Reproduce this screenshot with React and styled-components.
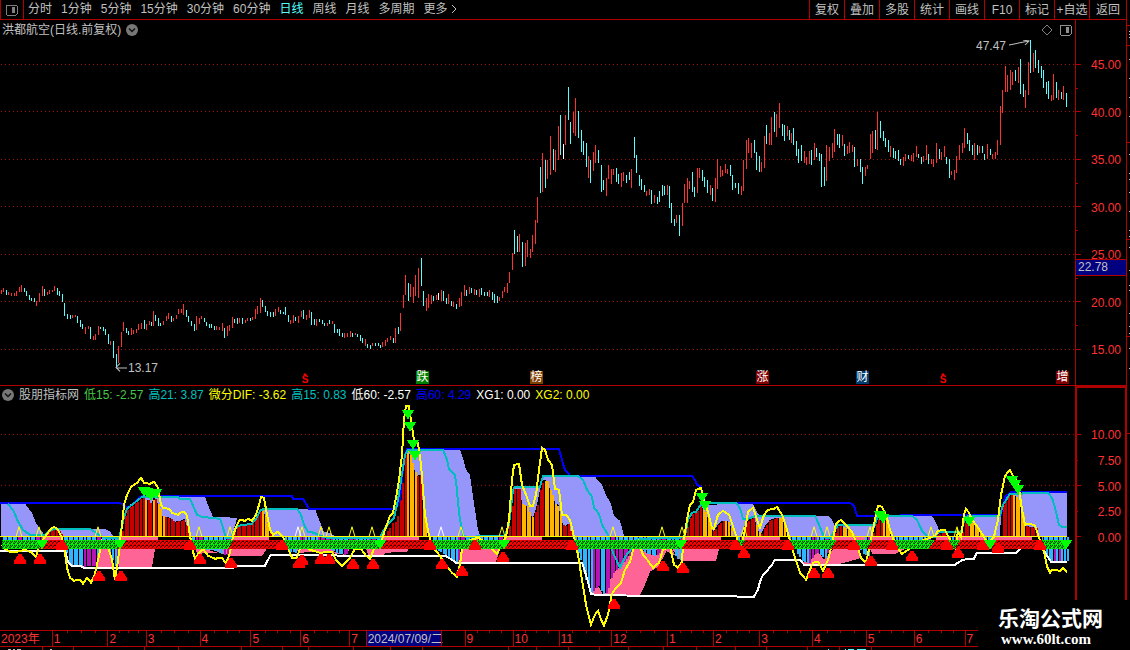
import React from 'react';
import styled, { createGlobalStyle, css } from 'styled-components';

const GlobalStyle = createGlobalStyle`
    * {
        box-sizing: border-box;
    }
    body {
        margin: 0;
        background: #000;
    }
`;

const RED = '#b00000';
const CYAN = '#54ffff';

const Page = styled.div`
    display: flex;
    height: 100vh;
    min-height: 480px;
    overflow: hidden;
    background: #000;
    color: #c0c0c0;
    font-family: 'Liberation Sans', 'Noto Sans CJK SC', sans-serif;
    font-size: 12px;
    line-height: 16px;
    position: relative;
`;

const Main = styled.main`
    flex: 1;
    min-width: 0;
    display: flex;
    flex-direction: column;
`;

const Edge = styled.svg`
    width: 4px;
    height: 100%;
    flex: none;
`;

const Toolbar = styled.nav`
    display: flex;
    justify-content: space-between;
    height: 20px;
    flex: none;
    border-bottom: 1px solid ${RED};
`;

const Periods = styled.div`
    display: flex;
    gap: 9px;
`;

const PlainButton = styled.button`
    border: 0;
    padding: 0;
    background: none;
    color: inherit;
    font: inherit;
    white-space: nowrap;
    display: flex;
    align-items: center;
    cursor: pointer;
`;

const PeriodButton = styled(PlainButton)`
    height: 18px;
    color: ${props => props.$active ? CYAN : '#c0c0c0'};
`;

const LayoutButton = styled(PlainButton)`
    width: 24px;
    height: 19px;
    margin-right: -5px;
    padding-left: 4px;
    border: solid ${RED};
    border-width: 0 1px;
`;

const Tools = styled.div`
    display: flex;
`;

const ToolButton = styled(PlainButton)`
    width: 35px;
    height: 19px;
    justify-content: center;
    border-left: 1px solid ${RED};
    &:last-child {
        width: 37px;
    }
`;

const Panel = styled.section`
    display: flex;
    flex: ${props => props.$size} 1 0;
    min-height: 0;
    ${props => props.$ruled ? css`border-bottom: 1px solid ${RED};` : css``}
`;

const PanelBody = styled.div`
    flex: 1;
    min-width: 0;
    display: flex;
    flex-direction: column;
`;

const PanelHeader = styled.header`
    display: flex;
    align-items: center;
    flex: none;
    height: ${props => props.$height}px;
    gap: 5px;
    padding: 0 3px 0 2px;
    white-space: nowrap;
`;

const HeaderIcons = styled.div`
    display: flex;
    align-items: center;
    gap: 6px;
    margin-left: auto;
`;

const Reading = styled.span`
    color: ${props => props.color};
`;

const Chart = styled.div`
    position: relative;
    flex: 1;
    min-height: 0;
`;

const Plot = styled.svg`
    display: block;
    width: 100%;
    height: 100%;
`;

const Pin = styled.span`
    position: absolute;
    left: ${props => props.$x / 10.75}%;
    top: ${props => (props.$y - 40) / 3.45}%;
    line-height: 16px;
`;

const Badge = styled.span`
    position: absolute;
    left: ${props => props.$x / 10.75}%;
    bottom: 1px;
    width: 13px;
    height: 13px;
    line-height: 13px;
    text-align: center;
    color: #fff;
    background: ${props => props.color};
`;

const DividendMark = styled.span`
    position: absolute;
    left: ${props => props.$x / 10.75}%;
    bottom: 0;
    width: 8px;
    line-height: 10px;
    font-size: 10px;
    font-weight: bold;
    text-align: center;
    color: #ff0000;
    &::before {
        content: '';
        position: absolute;
        left: 2px;
        top: -2px;
        border: solid transparent;
        border-width: 0 2px 2px;
        border-bottom-color: #ff0000;
    }
`;

const Axis = styled.div`
    position: relative;
    width: 51px;
    flex: none;
    display: flex;
    border-left: ${props => props.$bold ? 2 : 1}px solid ${RED};
    ${props => props.$bold ? css`
        border-right: 2px solid ${RED};
        border-top: 2px solid ${RED};
        width: 52px;
        margin-right: -1px;
    ` : css``}
`;

const Ticks = styled.svg`
    width: 6px;
    height: 100%;
    flex: none;
`;

const AxisLabels = styled.div`
    flex: 1;
    display: flex;
    flex-direction: column;
    justify-content: space-between;
    align-items: flex-end;
    padding: ${props => props.$pad};
    color: #ff3232;
`;

const PriceTag = styled.div`
    position: absolute;
    left: -1px;
    right: 0;
    top: 239px;
    height: 17px;
    line-height: 15px;
    padding-left: 2px;
    background: #000080;
    border: solid ${RED};
    border-width: 1px 0 1px 1px;
`;

const TimeAxis = styled.div`
    position: relative;
    display: flex;
    flex: none;
    height: 17px;
    margin-right: 148px;
    border: solid ${RED};
    border-width: 1px 0;
    color: #ff3232;
`;

const Month = styled.span`
    flex: ${props => props.$span} 1 0;
    min-width: 0;
    padding-left: 1px;
    line-height: 16px;
    white-space: nowrap;
    ${props => props.$first ? css`` : css`border-left: 1px solid ${RED};`}
    ${props => props.$current ? css`
        background: #000080;
        color: #c0c0c0;
    ` : css``}
`;

const MonthTicks = styled.svg`
    position: absolute;
    inset: 0;
    width: 100%;
    height: 3px;
`;

const Footer = styled.svg`
    display: block;
    flex: none;
    width: 100%;
    height: 3px;
`;

const SiteMark = styled.div`
    position: absolute;
    right: 0;
    bottom: 0;
    width: 152px;
    height: 50px;
    padding: 8px 0 0 20px;
    background: #000;
    color: #fff;
    font-size: 21px;
    line-height: 22px;
    font-weight: bold;
    white-space: nowrap;
`;

const SiteLink = styled.a`
    display: block;
    padding-left: 3px;
    color: #fff;
    text-decoration: none;
    font-family: 'Liberation Serif', serif;
    font-size: 15px;
    line-height: 18px;
`;

const STEP = 28 / 11;

// each run: x of the first bar, then colour + high:low for every bar
const CANDLES = [
    [1, 'r290:294 r288:292 c290:295 r292:295 r293:296 r293:296 r291:296 r287:292 r285:292 c288:292 c291:296 c295:300 c298:301 c298:302 r301:306 r293:302 r286:296 c289:296 r292:295 r290:294 r290:292 r286:291 c288:295 c291:296 c294:302 c303:316 c314:319 c315:319 r315:318'],
    [75, 'r315:317 c316:323 c320:327 c324:329 r327:334 r326:329 c327:339 r336:340 r334:340 r326:335 c327:329 c327:331 c329:335 c334:344 r341:345 c341:358 c354:367 r346:363 r332:347 r322:331 c328:333 c331:335 r328:335 r330:334 r329:333 r324:330 r323:329 c320:329 r324:330 r321:325 c322:326'],
    [153, 'r311:326 c315:321 c318:326 c323:326 r321:325 r316:321 r313:319 c316:322 r318:321 r315:319 r309:314 r309:313 r304:315 c310:317 c316:322 c321:326 c324:331 r316:330 r318:324 r316:319 c318:322 c322:326 c324:328 c324:328 c326:330 r326:330 r327:330 r323:331 c328:338 r326:336 r325:331'],
    [232, 'r317:328 c319:323 c318:324 r318:323 c318:324 r320:323 r318:321 c318:321 r317:320 r309:319 r306:314 r298:313 c300:307 c306:312 c311:316 c312:317 c312:317 r309:316 r307:312 c310:314 c312:314 c307:315 c315:322 r320:324 r315:323 c317:321 r316:323 r311:317 c310:319 r315:320'],
    [309, 'r310:318 c312:325 c319:325 r319:326 c319:322 c320:324 c323:326 r323:326 c320:324 r321:324 c324:333 c329:333 c329:336 c333:337 r333:338 r333:337 r331:337 c333:337 r333:335 c334:337 c335:341 c338:343 r339:346 c344:348 c345:349 r343:346 c343:346 c343:346'],
    [380, 'c345:348 r342:347 r340:346 r338:342 r336:340 c338:343 r328:343 c327:334 r313:331 r295:308 r275:295 c283:301 r284:297 r287:303 r275:296 r268:298 c258:286 c291:306 r298:311 r294:308 r295:304 c296:301 r295:300 w293:300 r290:301 c291:301'],
    [446, 'c298:304 r294:304 c301:306 r302:307 c304:309 r298:307 r292:306 r285:296 c290:296 r287:294 c288:293 r289:295 c290:295 r289:297 c288:295 c292:296 c292:296 r290:297 c292:300 c294:303 c296:303 r297:301 r291:298 r287:292 r283:293 r272:283'],
    [512, 'r253:270 c230:254 c236:252 r234:252 c242:267 r243:266 r240:257 r249:258 r235:252 r220:244 r197:223 c167:193 r153:192 c160:188 r160:179 r136:175 c149:170 r150:172 r126:160 c115:155 w144:159 r115:145 c87:120 c122:144 r112:133 r98:136 c111:138 c130:152 c141:155 c143:167'],
    [588, 'r156:178 c160:183 r152:171 r145:163 c150:163 c165:192 c180:190 r178:196 r165:179 r169:184 r169:175 c168:182 c174:184 r173:187 r172:181 c175:183 c172:180 r169:188 c137:158 c155:173 c175:186 c179:190 c185:192 r191:196 r189:195 c190:204 r195:203 c197:204 c191:202 c185:196 c186:195 r185:195'],
    [669, 'c186:208 c203:223 c219:226 r215:223 c215:236 r203:226 r184:203 r178:203 r181:189 c172:192 c187:197 r168:193 r168:178 c170:181 c177:187 c180:193 r185:195 c188:201 r178:202 r159:189 r166:177 r170:176 r164:173 r169:174 c165:176 c175:190 c183:188 c183:194'],
    [741, 'r186:195 r160:191 r140:169 r138:153 r143:158 c140:153 c152:170 c156:172 r162:172 r136:168 c125:144 r133:145 r117:145 c112:132 r114:137 r103:128 c124:136 c125:141 r126:136 c130:140'],
    [791, 'r133:143 c128:145 c141:156 c149:163 c145:161 r151:163 r157:165 r151:164 c150:165 r143:160 c148:157 c153:161 c154:187 c167:186 r145:181 r147:161 r143:158 r129:152 c134:145 c134:148 r135:146 c144:156 r146:154 r142:153 r145:152 c147:167 r159:166 c159:172 c167:184 r167:176 r165:169'],
    [870, 'r134:159 r131:153 c130:149 r112:150 c121:138 c131:141 c138:147 c140:152 r146:157 c148:158 c151:159 c150:161 c159:165 r157:166 r154:161 c155:159 r155:161 r153:162 r146:157 c154:158 c157:164 r156:162 r145:160 c154:164 r159:164 r159:167 r143:163 c149:159 r152:160 r146:157 c157:164'],
    [949, 'c159:178 r171:175 r170:180 r156:173 r145:160 r143:153 r128:148 c133:144 c140:151 c145:155 r143:160 c145:155 r146:153 c146:153 c154:160 r144:159 c149:155 r154:159 r152:159 r140:155 r106:145 r90:113 r66:92 r75:92 r70:90 r72:85 c70:81 r67:83 c59:94 c84:97 r90:108'],
    [1028, 'r62:95 c40:73 r53:72 c50:68 c60:73 c66:78 c70:88 c82:94 c81:99 r95:101 r74:100 c82:98 r90:100 c92:99 r86:100 c93:107']
];

const CANDLE_COLORS = { r: '#ff3232', c: CYAN, w: '#fff' };

const candles = CANDLES.flatMap(([start, run]) => run.split(' ').map((bar, i) => {
    const [high, low] = bar.slice(1).split(':').map(Number);
    return { x: start + Math.round(i * STEP - 0.2), high, low, color: CANDLE_COLORS[bar[0]] };
}));

const parse = (text) => text.split(' ').map(pair => pair.split(',').map(Number));

const BLUE_LINE = '0,503 120,503 126,507 128,508 132,505 138,499 142,496 292,496 293,499 303,499 309,509 396,509 400,500 402,478 405,455 407,449 559,449 563,464 565,470 568,473 570,476 692,476 695,480 697,485 701,487 702,495 706,502 711,503 850,503 854,506 857,516 1001,515 1003,505 1005,497 1010,493 1012,492 1067,492';

const TEAL_LINE = '8,504 14,512 18,522 23,530 30,535 45,535 50,531 54,529 90,529 93,531 100,536 106,538 119,538 122,527 124,517 127,509 132,505 142,497 178,497 180,499 190,499 197,515 202,517 220,519 223,528 226,538 231,538 234,531 238,526 252,524 256,519 260,511 264,509 297,509 301,515 304,525 308,532 314,533 320,536 327,538 380,538 384,530 390,522 394,518 398,500 405,455 408,450 443,450 447,460 449,469 455,475 457,490 458,503 460,520 463,535 466,537 505,536 509,525 511,508 513,490 515,487 540,487 543,476 578,476 583,480 587,490 592,497 594,508 599,514 602,525 608,535 613,553 620,568 626,556 633,547 638,539 680,538 685,536 688,520 692,513 696,512 700,506 705,503 736,503 740,508 743,519 748,519 756,516 815,516 819,525 823,535 826,538 830,538 834,532 838,525 875,525 878,516 881,514 885,516 912,516 917,520 922,531 928,537 935,537 938,532 961,532 963,525 965,518 968,516 1000,516 1003,505 1010,494 1048,493 1052,498 1055,508 1059,525 1062,527 1067,527';

const YELLOW_LINE = '2,545 5,549 10,552 17,552 25,550 32,553 36,557 40,545 45,537 50,530 54,527 58,530 62,538 65,553 67,568 70,578 74,581 80,580 83,584 87,578 91,583 95,574 99,556 102,541 108,548 112,560 115,580 118,561 120,541 122,525 124,505 127,495 131,487 137,483 141,478 144,483 150,484 154,482 158,488 161,505 163,508 169,509 172,513 178,515 180,513 184,512 187,516 190,536 193,552 195,559 199,553 203,549 208,556 215,559 222,558 226,564 230,553 232,541 235,530 238,523 240,520 245,521 248,519 252,521 256,515 259,505 261,497 264,498 267,515 270,530 273,535 278,532 283,537 288,549 292,558 297,558 300,549 305,547 310,550 320,553 332,552 336,560 342,566 350,558 355,549 361,549 366,556 370,559 374,549 380,546 385,530 390,516 393,513 396,498 399,480 402,455 404,420 406,406 409,406 411,420 414,440 418,443 421,465 423,490 425,515 429,536 434,549 440,556 446,566 452,573 457,577 460,565 462,549 468,541 478,538 485,542 492,549 497,554 502,545 506,537 509,520 512,480 514,465 519,464 522,485 526,495 530,506 533,506 536,495 539,470 542,448 545,450 548,460 552,465 555,489 559,490 562,515 566,515 570,520 574,537 578,555 582,580 586,605 591,625 595,615 598,611 601,620 604,626 608,615 612,594 616,588 621,583 625,570 630,562 634,547 638,541 643,555 648,561 653,568 659,563 663,550 670,547 674,565 678,568 682,562 683,545 687,520 690,505 693,502 696,490 701,488 704,500 708,512 712,528 714,529 718,515 723,511 729,515 734,530 739,545 741,549 745,530 748,512 753,508 757,520 760,528 764,515 768,510 774,509 777,507 782,515 787,530 791,545 795,558 800,573 806,580 810,570 813,563 818,562 823,571 828,560 832,545 836,524 841,520 846,525 852,532 857,545 861,558 866,563 870,545 873,530 876,515 878,506 882,507 886,515 890,530 894,541 897,548 902,554 908,550 915,545 922,541 935,536 938,531 945,530 948,536 955,548 958,532 961,537 964,515 966,509 969,513 972,520 976,525 982,534 988,544 994,537 998,520 1001,495 1005,476 1010,470 1013,476 1018,482 1022,510 1025,525 1030,524 1035,526 1040,541 1044,552 1047,567 1050,573 1052,570 1060,571 1063,568 1067,573';

const WHITE_LINES = [
    '0,551 65,551 68,562 72,566 80,566 84,568 233,568 240,566 265,566 268,560 271,555 325,555 340,556 445,556 452,560 456,563 582,563 585,572 588,582 591,594 595,595 632,596 754,597 758,590 760,582 763,575 768,570 772,565 775,560 800,560 804,565 955,565 958,563 963,560 974,559 977,553 1016,553 1020,549',
    '1043,549 1047,556 1051,562 1067,562'
];

const CLOUDS = [
    '1,504 25,504 32,513 36,523 42,532 45,536 1,536',
    '47,536 55,529 105,529 110,532 113,536',
    '130,536 130,505 142,497 205,497 209,508 213,517 237,518 235,526 232,536',
    '262,536 262,509 315,509 319,520 324,532 330,533 334,536',
    '406,536 406,450 460,450 463,458 466,470 470,475 472,490 475,510 478,530 480,536',
    '513,536 513,488 540,487 543,477 595,477 602,485 606,495 611,504 614,516 620,521 624,536',
    '700,536 700,505 753,504 758,514 760,516 828,516 832,520 835,526 875,525 880,516 932,516 937,525 941,536',
    '960,536 962,530 968,517 1000,516 1005,500 1012,493 1067,493 1067,536'
];

// positive columns: top profile and the x ranges drawn in orange
const PEAKS = [
    ['44,534 48,531 53,529 58,530 62,535', []],
    ['121,536 123,525 126,512 129,507 133,505 138,501 142,497 146,501 149,500 151,505 154,497 157,502 160,509 162,516 166,517 170,518 174,522 180,521 185,519 187,530 189,536', [[144, 147], [151, 154], [157, 165]]],
    ['231,536 235,528 240,526 250,525 256,518 261,510 265,515 269,530 271,536', [[261, 268]]],
    ['383,536 388,530 392,523 396,521 400,500 403,475 405,455 407,449 410,455 413,467 417,476 420,475 421,490 424,510 427,530 429,536', [[407, 417], [423, 429]]],
    ['507,536 511,515 514,489 520,489 522,504 527,506 530,515 533,518 537,505 540,490 543,480 547,481 551,493 554,498 556,510 558,502 561,520 564,527 568,524 571,535', [[521, 534], [544, 563]]],
    ['685,536 688,522 692,514 697,511 700,505 705,512 709,520 712,530 714,531 717,526 722,521 727,521 730,525 733,535', [[703, 713], [725, 733]]],
    ['742,536 745,524 749,520 752,518 755,519 757,530 761,534 765,526 770,520 777,518 782,518 785,526 788,536', [[755, 761], [779, 788]]],
    ['834,536 837,527 842,526 848,530 853,534 855,536', [[843, 855]]],
    ['872,536 876,524 879,516 882,516 886,520 890,530 893,536', [[882, 893]]],
    ['936,535 942,532 948,536', []],
    ['961,536 964,525 967,520 972,523 977,528 983,535', [[970, 984]]],
    ['1000,536 1001,515 1004,500 1009,495 1012,493 1016,497 1020,503 1023,515 1025,526 1030,527 1036,528 1038,536', [[1012, 1025]]]
];

const PINK_AREAS = [
    '96,567 98,549 108,549 114,567', '119,567 119,549 155,549 152,567',
    '195,549 198,555 205,553 225,554 230,556 262,556 267,549',
    '294,549 300,553 320,552 345,555 350,549 366,549 368,555 384,555 386,553 407,552 409,549',
    '460,562 463,549 500,549 496,562',
    '592,595 594,588 598,586 603,595 607,592 612,574 620,567 628,556 635,549 668,549 658,567 650,572 645,585 640,595',
    '640,549 652,556 664,550 675,556 681,561 716,561 719,549',
    '802,564 812,555 818,552 824,560 834,549 858,549 862,558 848,562 840,564',
    '870,549 906,549 896,554 872,554'
];

// negative columns: bottom profile and the x ranges drawn in purple
const TROUGHS = [
    ['65,549 68,560 70,566 78,567 95,566 98,549', [[84, 97]]],
    ['108,549 112,560 114,566 118,566', [[117, 119]]],
    ['203,549 215,551 222,554 229,556', [[224, 230]]],
    ['286,549 290,552 298,553', [[296, 299]]],
    ['330,549 336,553 345,555 349,549', [[342, 349]]],
    ['433,549 440,552 447,557 452,562 459,562', [[457, 460]]],
    ['577,549 580,560 585,580 590,594 594,590 598,586 603,594 607,592 612,574 620,566 628,557 634,549', [[593, 600], [605, 634]]],
    ['640,550 648,554 655,556 662,551', [[656, 663]]],
    ['672,549 676,558 681,561', []],
    ['794,549 798,556 803,562 810,563 813,556 818,552 824,560 828,550', [[808, 820], [826, 830]]],
    ['859,549 864,555 870,557', []],
    ['1044,549 1047,558 1051,562 1067,561', [[1052, 1055], [1058, 1061]]]
];

const RED_ZONES = [[42, 64], [120, 192], [231, 285], [381, 432], [472, 478], [505, 574], [682, 738], [743, 790], [834, 857], [870, 893], [932, 949], [958, 985], [994, 1042]];
const PINK_STRIPS = [[42, 61], [119, 158], [231, 269], [381, 419], [472, 478], [505, 542], [682, 721], [743, 780], [834, 865], [870, 892], [936, 949], [958, 985], [994, 1032]];
const SPIKES = [19, 39, 98, 199, 230, 302, 321, 329, 352, 372, 461, 502, 613, 662, 682, 744, 814, 827, 870, 931, 957];
const WHITE_SPIKES = [298, 441];

const SELLS = [[144, 487], [147, 488], [151, 491], [156, 489], [408, 410], [410, 422], [413, 440], [415, 451], [702, 493], [705, 501], [880, 511], [883, 514], [969, 517], [1012, 476], [1015, 480], [1018, 485], [1066, 540], [42, 540], [120, 540], [380, 540], [504, 540], [681, 540], [990, 540]];
const BUYS = [[20, 554], [40, 554], [99, 571], [121, 571], [62, 540], [190, 540], [200, 554], [231, 558], [282, 540], [299, 558], [302, 555], [321, 554], [329, 554], [353, 559], [373, 559], [430, 540], [442, 559], [462, 566], [475, 540], [503, 552], [572, 540], [614, 599], [663, 561], [683, 563], [736, 540], [744, 548], [788, 540], [814, 568], [828, 568], [871, 556], [854, 540], [892, 540], [912, 551], [947, 540], [958, 548], [983, 540], [998, 543], [1040, 540]];

const heightAt = (points, x) => {
    for (let i = 1; i < points.length; i++) {
        const [x0, y0] = points[i - 1];
        const [x1, y1] = points[i];
        if (x <= x1) {
            return Math.round(y0 + (y1 - y0) * (x - x0) / (x1 - x0));
        }
    }
    return points[points.length - 1][1];
};

const inRanges = (ranges, x) => ranges.some(([from, to]) => x >= from && x < to);

const columns = (profile, ranges, base, colors) => {
    const points = parse(profile);
    const bars = [];
    const end = points[points.length - 1][0];
    for (let i = Math.ceil(points[0][0] / STEP); i * STEP <= end; i++) {
        const x = Math.round(i * STEP);
        const y = heightAt(points, x);
        bars.push({ x, y: Math.min(y, base), h: Math.abs(base - y), fill: inRanges(ranges, x) ? colors[1] : colors[0] });
    }
    return bars;
};

const peakBars = PEAKS.flatMap(([profile, ranges]) => columns(profile, ranges, 536, ['#c80000', '#ffb400']));
const troughBars = TROUGHS.flatMap(([profile, ranges]) => columns(profile, ranges, 549, ['#32b4ff', '#b414b4']));
const stripBars = columns('1,540 1067,540', SPIKES.map(x => [x - 3, x + 3]), 537, ['#32b4ff', '#b414b4']);

const Bars = ({ bars }) => bars.map((bar, i) => (
    <rect key={i} x={bar.x} y={bar.y} width={2} height={bar.h} fill={bar.fill} />
));

const GridLine = ({ y }) => (
    <line x1={1} x2={1075} y1={y + 0.5} y2={y + 0.5} stroke='#a01010' strokeDasharray='1 3' />
);

const LayoutIcon = ({ color = '#808080' }) => (
    <svg width='13' height='12' viewBox='0 0 13 12' fill='none' shapeRendering='crispEdges'>
        <rect x='1' y='1' width='11' height='10' rx='1' stroke={color} />
        <rect x='7' y='3' width='3' height='6' fill={color} />
    </svg>
);

const ChevronIcon = () => (
    <svg width='12' height='12' viewBox='0 0 12 12'>
        <circle cx='6' cy='6' r='6' fill='#777' />
        <path d='M3 4.5 L6 7.5 L9 4.5' fill='none' stroke='#111' strokeWidth='1.5' />
    </svg>
);

const PriceChart = () => (
    <Chart>
        <Plot viewBox='0 40 1075 345' preserveAspectRatio='none' shapeRendering='crispEdges'>
            {[64, 111, 159, 206, 254, 301, 349].map(y => <GridLine key={y} y={y} />)}
            {candles.map(bar => (
                <rect key={bar.x} x={bar.x} y={bar.high} width={1} height={bar.low - bar.high} fill={bar.color} />
            ))}
            <path d='M1009 45 L1029 41 M1023 40 L1029 41 L1025 45 M127 367.500 H116 M120 363 L116 367 L120 371' fill='none' stroke='#c0c0c0' shapeRendering='auto' />
        </Plot>
        <Pin $x={976} $y={38}>47.47</Pin>
        <Pin $x={128} $y={360}>13.17</Pin>
        <DividendMark $x={301}>S</DividendMark>
        <Badge $x={416} color='#008000'>跌</Badge>
        <Badge $x={530} color='#804000'>榜</Badge>
        <Badge $x={756} color='#800000'>涨</Badge>
        <Badge $x={856} color='#003c6e'>财</Badge>
        <DividendMark $x={939}>S</DividendMark>
        <Badge $x={1056} color='#800000'>增</Badge>
    </Chart>
);

const IndicatorChart = () => (
    <Chart>
        <Plot viewBox='0 403 1075 227' preserveAspectRatio='none' shapeRendering='crispEdges'>
            <defs>
                <pattern id='greenHatch' width='4' height='4' patternUnits='userSpaceOnUse'>
                    <rect width='4' height='4' fill='#00ff00' />
                    <path d='M0 1h1v1h-1z M2 1h1v1h-1z M3 2h1v1h-1z M1 3h1v1h-1z M2 3h1v1h-1z' fill='#000' />
                </pattern>
                <pattern id='redHatch' width='4' height='4' patternUnits='userSpaceOnUse'>
                    <rect width='4' height='4' fill='#ff0000' />
                    <path d='M2 1h2v1h-2z M1 2h1v1h-1z M0 3h1v1h-1z' fill='#000' />
                </pattern>
            </defs>
            <GridLine y={434} />
            <GridLine y={485} />
            {CLOUDS.map(points => <polygon key={points} points={points} fill='#9696fa' />)}
            {PEAKS.map(([profile]) => {
                const points = parse(profile);
                const left = points[0][0];
                const right = points[points.length - 1][0];
                return <polygon key={left} points={`${left},536 ${profile} ${right},536`} fill='#000' />;
            })}
            <Bars bars={peakBars} />
            {PINK_AREAS.map(points => <polygon key={points} points={points} fill='#ff6496' />)}
            {TROUGHS.map(([profile]) => <polygon key={profile} points={profile} fill='#000' />)}
            <Bars bars={troughBars} />
            <Bars bars={stripBars} />
            {RED_ZONES.map(([from, to]) => <rect key={from} x={from} y={537} width={to - from} height={3} fill='#000' />)}
            {PINK_STRIPS.map(([from, to]) => <rect key={from} x={from} y={537} width={to - from} height={3} fill='#ff6496' />)}
            <polyline points={BLUE_LINE} fill='none' stroke='#0000ff' strokeWidth='2' />
            <polyline points={TEAL_LINE} fill='none' stroke='#00bebe' strokeWidth='2' />
            {WHITE_LINES.map(points => <polyline key={points} points={points} fill='none' stroke='#fff' strokeWidth='2' />)}
            <polyline points={YELLOW_LINE} fill='none' stroke='#ffff00' strokeWidth='2' />
            <rect x='2' y='540' width='1065' height='9' fill='url(#greenHatch)' />
            {RED_ZONES.map(([from, to]) => (
                <polygon key={from} points={`${from + 3},540 ${to - 3},540 ${to + 3},549 ${from - 3},549`} fill='url(#redHatch)' />
            ))}
            {SPIKES.map(x => <polyline key={x} points={`${x - 3},537 ${x},527 ${x + 3},537`} fill='none' stroke='#ffff00' />)}
            {WHITE_SPIKES.map(x => <polyline key={x} points={`${x - 3},537 ${x},527 ${x + 3},537`} fill='none' stroke='#fff' />)}
            <rect x='0' y='536' width='1067' height='1' fill='#ffff00' />
            {BUYS.map(([x, y]) => <path key={`${x}-${y}`} d={`M${x - 1} ${y}h2l5 7v3h-12v-3z`} fill='#ff0000' />)}
            {SELLS.map(([x, y]) => <path key={`${x}-${y}`} d={`M${x - 6.5} ${y}h13l-6 9h-1z`} fill='#00ff00' />)}
        </Plot>
    </Chart>
);

const PERIODS = ['分时', '1分钟', '5分钟', '15分钟', '30分钟', '60分钟', '日线', '周线', '月线', '多周期'];
const TOOLS = ['复权', '叠加', '多股', '统计', '画线', 'F10', '标记', '+自选', '返回'];
const PRICES = ['45.00', '40.00', '35.00', '30.00', '25.00', '20.00', '15.00'];
const LEVELS = ['10.00', '7.50', '5.00', '2.50', '0.00'];

const READINGS = [
    ['低15: -2.57', '#46c846'],
    ['高21: 3.87', '#00c0c0'],
    ['微分DIF: -3.62', '#ffff00'],
    ['高15: 0.83', '#00c0c0'],
    ['低60: -2.57', '#fff'],
    ['高60: 4.29', '#0000ff'],
    ['XG1: 0.00', '#fff'],
    ['XG2: 0.00', '#ffff00']
];

const MONTHS = [
    ['2023年', 53], ['1', 56], ['2', 38], ['3', 54], ['4', 51], ['5', 50], ['6', 49], ['7', 15], ['2024/07/09/二', 77],
    ['', 22], ['9', 48], ['10', 46], ['11', 53], ['12', 56], ['1', 46], ['2', 46], ['3', 53], ['4', 54], ['5', 48], ['6', 51], ['7', 12]
];

const monthTicks = [];
MONTHS.reduce((left, [, span]) => {
    if (left > 0 && span > 30 && span < 70) {
        [0.25, 0.5, 0.75].forEach(part => monthTicks.push(Math.round(left + span * part)));
    }
    return left + span;
}, 0);

export default function App() {
    return (
        <Page>
            <GlobalStyle />
            <Main>
                <Toolbar>
                    <Periods>
                        <LayoutButton aria-label='layout'><LayoutIcon /></LayoutButton>
                        {PERIODS.map(name => (
                            <PeriodButton key={name} $active={name === '日线'}>{name}</PeriodButton>
                        ))}
                        <PeriodButton>
                            更多
                            <svg width='9' height='10' viewBox='0 0 9 10'>
                                <path d='M4 1 L8 5 L4 9' fill='none' stroke='#c0c0c0' />
                            </svg>
                        </PeriodButton>
                    </Periods>
                    <Tools>
                        {TOOLS.map(name => <ToolButton key={name}>{name}</ToolButton>)}
                    </Tools>
                </Toolbar>
                <Panel $size={366} $ruled>
                    <PanelBody>
                        <PanelHeader $height={20}>
                            <span>洪都航空(日线.前复权)</span>
                            <PlainButton aria-label='stock menu'><ChevronIcon /></PlainButton>
                            <HeaderIcons>
                                <svg width='12' height='12' viewBox='0 0 12 12'>
                                    <path d='M6 1 L11 6 L6 11 L1 6 Z' fill='none' stroke='#808080' />
                                </svg>
                                <PlainButton aria-label='side panel'><LayoutIcon color='#909090' /></PlainButton>
                            </HeaderIcons>
                        </PanelHeader>
                        <PriceChart />
                    </PanelBody>
                    <Axis>
                        <Ticks viewBox='0 20 6 365' preserveAspectRatio='none' shapeRendering='crispEdges'>
                            {[64, 111, 159, 206, 254, 301, 349].map(y => <rect key={y} y={y} width='5' height='1' fill={RED} />)}
                            {[88, 135, 183, 230, 278, 325].map(y => <rect key={y} y={y} width='2' height='1' fill={RED} />)}
                        </Ticks>
                        <AxisLabels $pad='37px 5px 27px 0'>
                            {PRICES.map(price => <span key={price}>{price}</span>)}
                        </AxisLabels>
                        <PriceTag>22.78</PriceTag>
                    </Axis>
                </Panel>
                <Panel $size={244}>
                    <PanelBody>
                        <PanelHeader $height={17}>
                            <PlainButton aria-label='indicator menu'><ChevronIcon /></PlainButton>
                            <span>股朋指标网</span>
                            {READINGS.map(([text, color]) => <Reading key={text} color={color}>{text}</Reading>)}
                        </PanelHeader>
                        <IndicatorChart />
                    </PanelBody>
                    <Axis $bold>
                        <Ticks viewBox='0 388 6 242' preserveAspectRatio='none' shapeRendering='crispEdges'>
                            {[434, 485, 536].map(y => <rect key={y} y={y} width='4' height='1' fill={RED} />)}
                            {[460, 511].map(y => <rect key={y} y={y} width='1' height='1' fill={RED} />)}
                        </Ticks>
                        <AxisLabels $pad='39px 4px 84px 0'>
                            {LEVELS.map(level => <span key={level}>{level}</span>)}
                        </AxisLabels>
                    </Axis>
                </Panel>
                <TimeAxis>
                    {MONTHS.map(([name, span], i) => (
                        <Month key={i} $span={span} $first={i === 0} $current={span === 77}>{name}</Month>
                    ))}
                    <MonthTicks viewBox='0 0 978 3' preserveAspectRatio='none' shapeRendering='crispEdges'>
                        {monthTicks.map(x => <rect key={x} x={x} width='1' height='2' fill={RED} />)}
                    </MonthTicks>
                </TimeAxis>
                <Footer viewBox='0 0 1126 3' preserveAspectRatio='none' shapeRendering='crispEdges'>
                    {[42, 73, 144, 178, 241, 282, 308, 353, 390, 422, 508, 536, 568, 599, 628, 663, 696, 735, 766, 807, 839, 871].map(x => (
                        <rect key={x} x={x} width='1' height='3' fill={RED} />
                    ))}
                    <path d='M8 2h3 M13 2h2 M17 2h4 M50 2h2' stroke='#c0c0c0' />
                    <path d='M828 2h1 M845 2h1 M848 2h6 M857 2h9' stroke={CYAN} />
                </Footer>
            </Main>
            <Edge viewBox='0 0 4 650' preserveAspectRatio='none' shapeRendering='crispEdges'>
                <rect width='1' height='650' fill={RED} />
                {[25, 45, 142, 239, 336, 433].map(y => <rect key={y} y={y} width='4' height='1' fill={RED} />)}
                {[31, 34, 37, 59, 78, 97, 116, 154, 173, 179, 192, 211, 230, 236, 247, 270, 285, 290, 313, 326, 333, 348, 368].map(y => (
                    <rect key={y} x='3' y={y} width='1' height='1' fill='#c0c0c0' />
                ))}
            </Edge>
            <SiteMark>
                乐淘公式网
                <SiteLink href='#'>www.60lt.com</SiteLink>
            </SiteMark>
        </Page>
    );
}
